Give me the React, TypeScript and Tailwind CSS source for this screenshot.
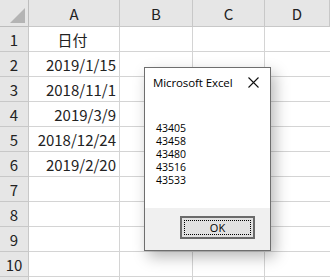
import React from 'react'

const ROWS = ['日付', '2019/1/15', '2018/11/1', '2019/3/9', '2018/12/24', '2019/2/20', '', '', '', '', '']
const COLS = ['A', 'B', 'C', 'D']
const VALUES = ['43405', '43458', '43480', '43516', '43533']

const cellFont = { fontFamily: '"Noto Sans CJK JP", "Noto Sans", sans-serif' }

function Sheet() {
  return (
    <div
      className="grid grid-cols-[29px_91px_73px_72px_1fr] grid-rows-[27px_repeat(11,25px)] bg-white text-[#222]"
      style={cellFont}
    >
      {/* corner */}
      <div className="relative bg-[#e6e6e6] border-r border-b border-[#bdbdbd]">
        <div className="absolute right-[3px] bottom-[3px] w-0 h-0 border-l-[15px] border-l-transparent border-b-[15px] border-b-[#b4b4b4]" />
      </div>
      {COLS.map((c) => (
        <div
          key={c}
          className="flex items-center justify-center bg-[#e6e6e6] border-r border-b border-[#c8c8c8] text-[15px] leading-none"
        >
          {c}
        </div>
      ))}
      {ROWS.map((v, i) => (
        <React.Fragment key={i}>
          {/* last row is only partly in view, its number falls below the edge */}
          <div className="flex items-center justify-center bg-[#e6e6e6] border-r border-b border-[#c8c8c8] text-[15px] leading-none">
            {i < 10 ? i + 1 : ''}
          </div>
          <div
            className={`flex items-center ${i === 0 ? 'justify-center' : 'justify-end'} pr-[3px] border-r border-b border-[#d4d4d4] text-[15px] leading-none`}
          >
            {v}
          </div>
          <div className="border-r border-b border-[#d4d4d4]" />
          <div className="border-r border-b border-[#d4d4d4]" />
          <div className="border-b border-[#d4d4d4]" />
        </React.Fragment>
      ))}
    </div>
  )
}

function MessageBox() {
  return (
    <div
      className="absolute left-[144px] top-[67px] w-[127px] h-[184px] flex flex-col bg-white border border-[#6e6e6e] shadow-[4px_6px_14px_rgba(0,0,0,0.28)] text-black"
      style={{ fontFamily: '"Open Sans", "Noto Sans", sans-serif' }}
    >
      <div className="flex items-center justify-between pl-[8px] pr-[11px] h-[28px] pt-[1px]">
        <span className="text-[11.5px] tracking-[-0.1px]">Microsoft Excel</span>
        <svg width="11" height="11" viewBox="0 0 11 11">
          <path d="M0.5 0.5 L10.5 10.5 M10.5 0.5 L0.5 10.5" stroke="#111" strokeWidth="1.1" />
        </svg>
      </div>
      <div className="flex-1 pl-[11px] pt-[26px] text-[10.5px] leading-[13px]">
        {VALUES.map((n) => (
          <div key={n}>{n}</div>
        ))}
      </div>
      <div className="h-[42px] bg-[#f0f0f0] flex items-start justify-end pr-[15px] pt-[8px]">
        <button className="w-[75px] h-[23px] bg-[#e1e1e1] border-2 border-[#6a6a6a] p-[2px] flex">
          <span className="flex-1 flex items-center justify-center border border-dotted border-black text-[11px] leading-none">
            OK
          </span>
        </button>
      </div>
    </div>
  )
}

export default function App() {
  return (
    <div className="relative w-[330px] h-[280px] overflow-hidden bg-white">
      <Sheet />
      <MessageBox />
    </div>
  )
}
